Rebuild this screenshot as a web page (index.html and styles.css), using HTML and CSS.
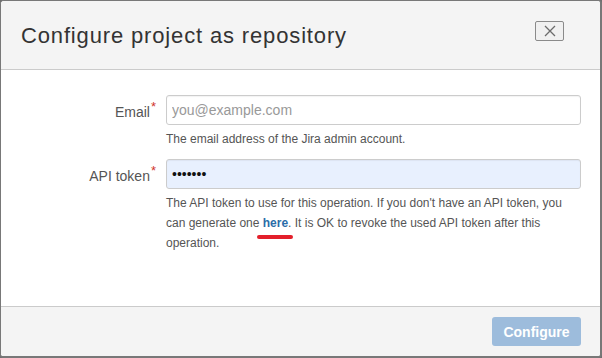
FILE: index.html
```html
<!DOCTYPE html>
<html lang="en">

<head>
    <meta charset="UTF-8">
    <title>Configure project as repository</title>
    <link rel="stylesheet" href="styles.css">
</head>

<body>
    <div class="dialog">
        <header class="dialog-header">
            <h2 class="dialog-title">Configure project as repository</h2>
            <button class="close-btn" type="button" aria-label="Close">
                <svg width="12" height="12" viewBox="0 0 12 12">
                    <path d="M1 1 L11 11 M11 1 L1 11" stroke="#6b6b6b" stroke-width="1.3" fill="none" />
                </svg>
            </button>
        </header>
        <main class="dialog-body">
            <div class="form-row">
                <label class="field-label">Email<span class="required">*</span></label>
                <div class="field">
                    <input type="text" class="text-input" placeholder="you@example.com" />
                    <p class="help">The email address of the Jira admin account.</p>
                </div>
            </div>
            <div class="form-row">
                <label class="field-label">API token<span class="required">*</span></label>
                <div class="field">
                    <input type="password" class="text-input filled" value="1234567" />
                    <p class="help">The API token to use for this operation. If you don't have an API token, you
                        can generate one <a class="link" href="#">here</a>. It is OK to revoke the used API token after this
                        operation.</p>
                </div>
            </div>
        </main>
        <footer class="dialog-footer">
            <button class="primary-btn" type="button" disabled>Configure</button>
        </footer>
    </div>
</body>

</html>
```

FILE: styles.css
```css
/* General Styles */
* {
    box-sizing: border-box;
}

body {
    margin: 0;
    padding: 0;
    font-family: "Liberation Sans", Arial, sans-serif;
    font-size: 14px;
    color: #333;
    background: #6f6f6f;
}

.dialog {
    width: 602px;
    height: 358px;
    display: flex;
    flex-direction: column;
    background: #fff;
    border: 1px solid #787878;
    border-width: 1px 2px 2px 1px;
    border-radius: 4px;
    overflow: hidden;
}

/* Header */
.dialog-header {
    display: flex;
    justify-content: space-between;
    align-items: flex-start;
    padding: 20px 36px 20px 20px;
    background: #f4f4f4;
    border-bottom: 1px solid #cbcbcb;
}

.dialog-title {
    margin: 2px 0 0;
    font-size: 22px;
    font-weight: normal;
    line-height: 26px;
    letter-spacing: 0.85px;
    color: #333;
}

.close-btn {
    width: 29px;
    height: 20px;
    padding: 0;
    display: flex;
    align-items: center;
    justify-content: center;
    background: #f0f0f0;
    border: 1px solid #8a8a8a;
    border-radius: 2px;
}

/* Body */
.dialog-body {
    flex: 1;
    padding: 25px 19px 0 0;
}

.form-row {
    display: grid;
    grid-template-columns: 155px 1fr;
    column-gap: 10px;
    margin-bottom: 10px;
}

.field-label {
    padding-top: 7px;
    line-height: 20px;
    text-align: right;
    color: #555;
}

.required {
    color: #d0352b;
    font-size: 13px;
    vertical-align: top;
    position: relative;
    top: -5px;
    margin-left: 1px;
}

.text-input {
    width: 100%;
    height: 30px;
    padding: 0 5px;
    font-family: inherit;
    font-size: 14px;
    color: #333;
    background: #fff;
    border: 1px solid #ccc;
    border-radius: 3px;
    box-shadow: inset 0 1px 1px rgba(0, 0, 0, 0.05);
    outline: none;
}

.text-input::placeholder {
    color: #999;
}

.text-input.filled {
    background: #e8f0fe;
    color: #111;
}

.help {
    margin: 4px 0 0;
    font-size: 12px;
    line-height: 20px;
    color: #555;
}

.link {
    position: relative;
    color: #2b6ca8;
    font-weight: bold;
    text-decoration: none;
}

/* red marker under the link */
.link::after {
    content: "";
    position: absolute;
    left: -6px;
    top: 100%;
    margin-top: 5px;
    width: 36px;
    height: 4px;
    border-radius: 2px;
    background: #e3202b;
}

/* Footer */
.dialog-footer {
    display: flex;
    justify-content: flex-end;
    padding: 10px 19px 10px;
    background: #f4f4f4;
    border-top: 1px solid #cbcbcb;
}

.primary-btn {
    width: 89px;
    height: 29px;
    font-family: inherit;
    font-size: 14px;
    font-weight: bold;
    color: #fff;
    background: #9dbcdc;
    border: none;
    border-radius: 3px;
}
```
